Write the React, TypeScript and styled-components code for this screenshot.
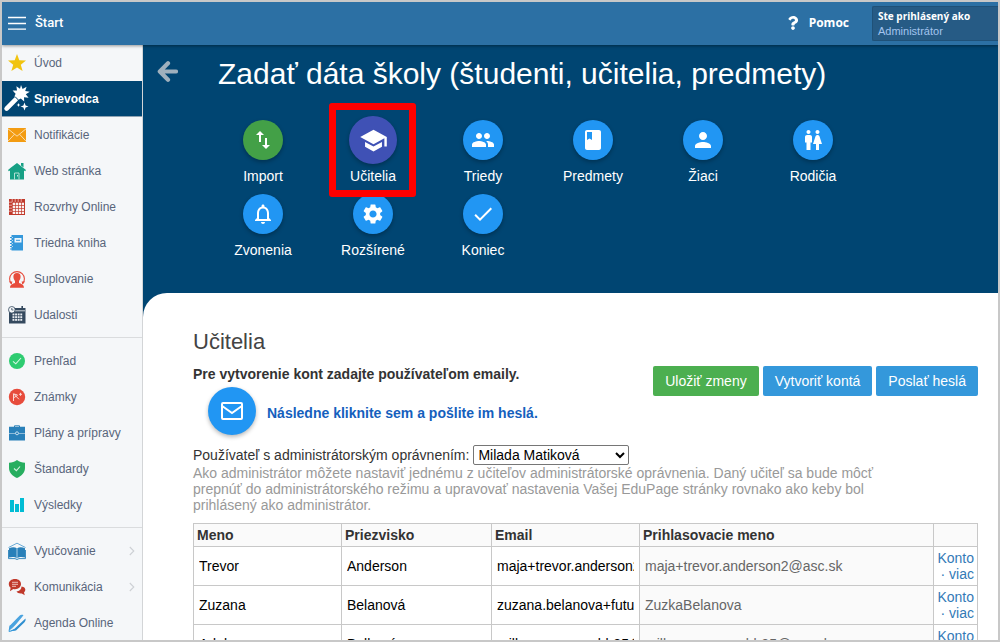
import React from "react";
import styled, { createGlobalStyle, css } from "styled-components";
import {
  MdBook,
  MdCheck,
  MdImportExport,
  MdNotificationsNone,
  MdPeople,
  MdPerson,
  MdSchool,
  MdSettings,
} from "react-icons/md";
import { FaQuestion } from "react-icons/fa";

const GlobalStyle = createGlobalStyle`
  * { box-sizing: border-box; }
  html, body, #root { height: 100%; }
  body {
    margin: 0;
    overflow: hidden;
    font-family: "Liberation Sans", Arial, sans-serif;
    font-size: 14px;
    line-height: 16px;
    color: #333;
  }
`;

const Frame = styled.div`
  display: flex;
  flex-direction: column;
  height: 100vh;
  border: 2px solid #c8c8c8;
  background: #fff;
  overflow: hidden;
`;

const TopBar = styled.header`
  position: relative;
  z-index: 2;
  flex: none;
  display: flex;
  align-items: center;
  height: 43px;
  padding-left: 6px;
  background: #2c70a4;
  box-shadow: 0 1px 3px rgba(0, 0, 0, 0.4);
  color: #fff;
`;

const StartButton = styled.button`
  display: flex;
  align-items: center;
  gap: 9px;
  padding: 0 0 2px;
  border: 0;
  background: none;
  color: #fff;
  font: 500 13px/16px Roboto, "Liberation Sans", sans-serif;
`;

const HelpLink = styled.a`
  display: flex;
  align-items: center;
  gap: 9px;
  margin-left: auto;
  margin-right: 23px;
  padding-bottom: 2px;
  color: #fff;
  font: 700 12px/16px "Open Sans", sans-serif;
  text-decoration: none;
`;

const UserBox = styled.div`
  width: 126px;
  height: 35px;
  padding: 2px 5px;
  border: 1px solid #1f5178;
  border-right: 0;
  border-radius: 2px 0 0 2px;
  background: #265b85;
  font: 700 10px/15px "Open Sans", sans-serif;
  white-space: nowrap;
`;

const UserRole = styled.div`
  color: #a3c4ee;
  font: 400 11px/14px "Liberation Sans", Arial, sans-serif;
`;

const Body = styled.div`
  flex: 1;
  display: flex;
  min-height: 0;
`;

const Sidebar = styled.nav`
  flex: none;
  width: 141px;
  border-right: 1px solid #d3d5d7;
  background: #f5f7f9;
  overflow: hidden;
`;

const NavGroup = styled.div`
  & + & {
    margin-top: 4px;
    padding-top: 5px;
    border-top: 1px solid #dadcde;
  }
`;

const NavItem = styled.a<{ $active?: boolean }>`
  display: flex;
  align-items: center;
  gap: 4px;
  height: 36px;
  padding: 0 7px 0 1px;
  color: #58657b;
  font-size: 12px;
  text-decoration: none;
  ${(p) =>
    p.$active &&
    css`
      border-bottom: 1px solid #8fa3b3;
      background: #004572;
      color: #fff;
      font-weight: 700;
    `}
`;

const NavIcon = styled.span`
  flex: none;
  display: flex;
  justify-content: center;
  width: 27px;
`;

const NavLabel = styled.span`
  flex: 1;
  white-space: nowrap;
`;

const Main = styled.main`
  flex: 1;
  display: flex;
  flex-direction: column;
  min-width: 0;
  background: #004572;
`;

const Hero = styled.section`
  flex: none;
  display: flex;
  align-items: flex-start;
  gap: 40px;
  padding: 10px 14px 35px;
  color: #fff;
`;

const BackButton = styled.button`
  display: flex;
  padding: 6px 0;
  border: 0;
  background: none;
  color: #9fb0bd;
`;

const WizardTitle = styled.h1`
  margin: 0 0 23px;
  font-size: 30px;
  line-height: 38px;
  font-weight: 400;
`;

const Steps = styled.div`
  display: grid;
  grid-template-columns: repeat(6, 110px);
  row-gap: 6px;
  margin-left: -10px;
`;

const Step = styled.a`
  position: relative;
  display: flex;
  flex-direction: column;
  align-items: center;
  gap: 4px;
  color: #fff;
  text-decoration: none;
`;

const StepSlot = styled.span`
  display: flex;
  align-items: center;
  height: 48px;
`;

const Disc = styled.span<{ $color: string; $size: number }>`
  display: flex;
  align-items: center;
  justify-content: center;
  width: ${(p) => p.$size}px;
  height: ${(p) => p.$size}px;
  border-radius: 50%;
  background: ${(p) => p.$color};
  color: #fff;
  box-shadow: 0 2px 4px rgba(0, 0, 0, 0.28);
`;

const Highlight = styled.span`
  position: absolute;
  z-index: 1;
  top: -13px;
  left: 11px;
  width: 87px;
  height: 94px;
  border: 7px solid #fe0000;
  border-radius: 3px;
`;

const Sheet = styled.section`
  flex: 1;
  min-height: 0;
  padding: 35px 20px 0 50px;
  border-top-left-radius: 24px;
  background: #fff;
  overflow: hidden;
`;

const SheetTitle = styled.h2`
  margin: 0 0 10px;
  color: #444;
  font-size: 22px;
  line-height: 28px;
  font-weight: 400;
`;

const Intro = styled.div`
  display: flex;
  justify-content: space-between;
  align-items: flex-start;
`;

const Hint = styled.p`
  margin: 0 0 5px;
  font-weight: 700;
`;

const SendLink = styled.a`
  display: flex;
  align-items: center;
  gap: 11px;
  margin-left: 15px;
  color: #1560bd;
  font-weight: 700;
  text-decoration: none;
`;

const SendText = styled.span`
  padding-top: 4px;
`;

const Actions = styled.div`
  display: flex;
  gap: 4px;
`;

const Action = styled.button<{ $color: string }>`
  height: 30px;
  padding: 0 12px;
  border: 0;
  border-radius: 2px;
  background: ${(p) => p.$color};
  color: #fff;
  font: inherit;
  white-space: nowrap;
`;

const AdminRow = styled.div`
  display: flex;
  align-items: center;
  gap: 4px;
  margin-top: 10px;

  select {
    width: 156px;
    height: 20px;
    border: 1px solid #767676;
    border-radius: 2px;
    background-color: #fff;
    color: #000;
    font: inherit;
  }
`;

const AdminNote = styled.p`
  max-width: 700px;
  margin: 0 0 10px;
  color: #999;
`;

const Table = styled.table`
  width: 100%;
  table-layout: fixed;
  border-collapse: collapse;

  th,
  td {
    border: 1px solid #c8c8c8;
  }
  th {
    height: 23px;
    padding: 0 3px;
    background: #fafafa;
    text-align: left;
  }
  td {
    height: 39px;
    padding: 0 5px;
  }
`;

const Col = styled.col<{ $width?: number }>`
  width: ${(p) => (p.$width ? `${p.$width}px` : "auto")};
`;

const CellInput = styled.input`
  display: block;
  width: 100%;
  padding: 0;
  border: 0;
  background: none;
  color: #000;
  font: inherit;
`;

const LoginCell = styled.td`
  background: #fafafa;
  color: #666;
`;

const LinksCell = styled.td`
  && {
    padding: 0 3px;
  }
  text-align: right;
  color: #337ab7;

  a {
    color: inherit;
    text-decoration: none;
  }
`;

const Svg = ({ w = 18, h = 18, box = "0 0 18 18", children }: { w?: number; h?: number; box?: string; children: React.ReactNode }) => (
  <svg width={w} height={h} viewBox={box} fill="none" aria-hidden="true">
    {children}
  </svg>
);

const StarIcon = () => (
  <Svg>
    <path d="M9 0l2.300 6.200L18 6.500l-5.200 4.200L14.600 17 9 13.400 3.400 17l1.800-6.300L0 6.500l6.700-.3z" fill="#f1c40f" />
  </Svg>
);

const WandIcon = () => (
  <Svg w={27} h={27} box="0 0 27 27">
    <path d="M3.600 23.600L13 14.200" stroke="#fff" strokeWidth="4.600" strokeLinecap="round" />
    <path d="M13.800 13.200L16 11" stroke="#fff" strokeWidth="4.600" />
    <path d="M18 0l1.600 4 4-2.200-1.400 4.200 4.600.8-4 2.400 2.800 3.600-4.600-.6.200 4.400-3.400-3-2.800 1.400-3.600-3.600 1.200-2.600-3-3.200 4.400-.2-.6-4.200 3.600 2.600z" fill="#fff" />
    <path d="M12 11.600l3.400 3.400" stroke="#004572" strokeWidth="1" />
    <path d="M21.500 17.500l1.100 2.900 2.900 1.100-2.900 1.100-1.100 2.900-1.100-2.900-2.900-1.100 2.900-1.100zM15.500 18l.6 1.400 1.400.6-1.400.6-.6 1.400-.6-1.400-1.400-.6 1.400-.6z" fill="#fff" />
  </Svg>
);

const EnvelopeIcon = () => (
  <Svg h={14} box="0 0 18 14">
    <path d="M0 0h18v14H0z" fill="#f39c12" />
    <path d="M0 .8l9 7.400 9-7.400M0 13.200l6.500-7M18 13.200l-6.500-7" stroke="#fbe3bd" strokeWidth=".9" />
  </Svg>
);

const HouseIcon = () => (
  <Svg>
    <path d="M9 1l9 7-.8 1.200L16 8.500V17.500H2V8.500l-1.200.7L0 8l3-2.400z" fill="#16a085" />
    <path d="M13 1h2.500v4.500L13 3.600z" fill="#16a085" />
    <path d="M6.500 17.500v-6.500h4.500v6.500" stroke="#bfe6dd" strokeWidth=".9" />
    <path d="M9.500 13v1.500" stroke="#bfe6dd" />
  </Svg>
);

const TimetableIcon = () => (
  <Svg>
    <path d="M1 1h16v16H1z" fill="#c0392b" />
    {[0, 1, 2, 3].map((r) =>
      [0, 1, 2, 3].map((c) => <rect key={`${r}-${c}`} x={4.700 + c * 3} y={4.700 + r * 3} width="2.300" height="2.300" fill="#faf0ef" />)
    )}
    <path d="M4.200 1v3M7.200 1v3M10.200 1v3M13.200 1v3M1 4.200h3M1 7.200h3M1 10.200h3M1 13.200h3" stroke="#f0c4bf" strokeWidth=".8" />
  </Svg>
);

const NotebookIcon = () => (
  <Svg>
    <path d="M3.500 1H15v15.500H3.500z" fill="#3498db" />
    <path d="M6.500 4h7v4.500h-7z" fill="#eaf5fc" />
    <path d="M8 6.300h4" stroke="#3498db" />
    <path d="M2 3.500h2M2 6.500h2M2 9.500h2M2 12.500h2M2 15h2" stroke="#3498db" strokeWidth="1.200" />
    <path d="M4 3.500h1M4 6.500h1M4 9.500h1M4 12.500h1" stroke="#d6ebf8" strokeWidth=".8" />
  </Svg>
);

const SubstituteIcon = () => (
  <Svg>
    <path d="M3.500 14A7.400 7.400 0 1 1 14.500 14" stroke="#e74c3c" strokeWidth="1.100" />
    <path d="M1 11.500l2.600 3 .8-3zM17 11.500l-2.600 3-.8-3z" fill="#e74c3c" />
    <path d="M9 3c2.500 0 3.700 1.600 3.600 3.800-.1 2-.9 3.500-1.600 4.200v2c2 .6 5 1.500 5 4.800H2c0-3.300 3-4.200 5-4.800v-2c-.7-.7-1.500-2.200-1.600-4.200C5.300 4.600 6.500 3 9 3z" fill="#e74c3c" />
  </Svg>
);

const EventsIcon = () => (
  <Svg>
    <path d="M1 2h16.500v15.500H1z" fill="#34495e" />
    <path d="M7 4.800h10" stroke="#f5f7f9" strokeWidth=".8" />
    <path d="M14.200 0v3.500" stroke="#34495e" strokeWidth="1.600" />
    {[0, 1, 2].map((r) =>
      [0, 1, 2, 3].map((c) => <rect key={`${r}-${c}`} x={4.500 + c * 2.600} y={7.500 + r * 2.700} width="1.900" height="1.900" fill="#e8ecf0" />)
    )}
    <circle cx="3.800" cy="3.800" r="3.300" fill="#f5f7f9" stroke="#34495e" strokeWidth=".8" />
    <path d="M3.800 2v2H5.500" stroke="#34495e" strokeWidth=".8" />
  </Svg>
);

const CheckDiscIcon = () => (
  <Svg>
    <circle cx="9" cy="9" r="8" fill="#2ecc71" />
    <path d="M5 9.300l2.800 2.500L13 6" stroke="#d9f7e5" strokeWidth="1.100" />
  </Svg>
);

const GradeIcon = () => (
  <Svg>
    <circle cx="9" cy="9" r="8.200" fill="#e74c3c" />
    <path d="M5.500 13V5.800l5.500 5.500M5.500 9.800l4-2.300M5.500 5.800l4 1.200M12.500 4.800v3M11 6.300h3" stroke="#fbd9d5" strokeWidth="1" />
  </Svg>
);

const BriefcaseIcon = () => (
  <Svg>
    <path d="M6.500 3V1.800h5V3" stroke="#2980b9" strokeWidth="1" />
    <path d="M1 2.700h16v6.200H1zM1 9.600h16v6.900H1z" fill="#2980b9" />
    <circle cx="9" cy="9.300" r="1.500" fill="#2980b9" stroke="#e3f0f9" strokeWidth=".8" />
  </Svg>
);

const ShieldIcon = () => (
  <Svg>
    <path d="M9 0c2.500 1.900 5 2.600 8 2.700V8c0 4.800-3.500 8-8 10-4.500-2-8-5.200-8-10V2.700C4 2.600 6.500 1.900 9 0z" fill="#27ae60" />
    <path d="M6 8.500l2.400 2.200L12 6.500" stroke="#d4f1e0" strokeWidth="1.100" />
  </Svg>
);

const BarsIcon = () => (
  <Svg>
    <path d="M2 4h4v12H2zM7 8h4v8H7zM12 2h4v14h-4z" fill="#00bcd4" />
  </Svg>
);

const SchoolBookIcon = () => (
  <Svg>
    <path d="M.5 5.500L9 1.200l8.500 4.300" stroke="#5aa3d3" strokeWidth=".9" />
    <path d="M1 6.300C4 5 7 5 9 6.500 11 5 14 5 17 6.300V15.500c-3-.8-6-.8-8 .8-2-1.600-5-1.600-8-.8z" fill="#2980b9" />
    <path d="M9 6.500v9.800" stroke="#cfe4f3" strokeWidth=".8" />
    <path d="M.5 8v8.600h6.500l2 .9 2-.9h6.500V8" stroke="#2980b9" strokeWidth=".9" />
  </Svg>
);

const ChatIcon = () => (
  <Svg>
    <path d="M13.500 8.500c3 .2 4 2 3.800 3.600-.1 1.200-.9 2-1.300 2.300l.8 2.800-3-1.800c-2.600.2-4.600-.4-5.300-1.900 2.800-.3 5-2 5-5z" fill="#c0392b" />
    <path d="M7 1c3.800 0 6 2.200 6 5s-2.400 5.200-6 5.200c-.6 0-1.200 0-1.700-.2L2 13.300l.6-3.500C1.300 8.900.8 7.500.8 6 .8 3.200 3.300 1 7 1z" fill="#c0392b" />
    <path d="M4 4.300h6M4 6.300h6M4 8.300h4" stroke="#f3cdc9" strokeWidth=".9" />
  </Svg>
);

const PencilIcon = () => (
  <Svg>
    <path d="M2 11.500L11.500 1.800c1-1.100 2.500-1.300 4-.6L5 14l-4 3z" fill="#4aa3df" />
    <path d="M6.500 14.800L17.500 4.500c.3 1.500 0 2.600-1 3.700L8 16.500 1 17.500z" fill="#2f8fd0" />
    <path d="M1 17.500L16.500 3" stroke="#f5f7f9" strokeWidth=".8" />
    <path d="M2 11.500L1 17.500l6-1.800" stroke="#3498db" strokeWidth=".9" />
  </Svg>
);

const MenuIcon = () => (
  <Svg h={14} box="0 0 18 14">
    <path d="M0 1.500h18M0 7.500h18M0 13.200h18" stroke="#fff" strokeWidth="1.300" />
  </Svg>
);

const Chevron = () => (
  <Svg w={6} h={10} box="0 0 6 10">
    <path d="M.8 1l4 4-4 4" stroke="#cdd0d4" strokeWidth="1.100" />
  </Svg>
);

const BackArrow = () => (
  <Svg w={21} h={21} box="0 0 21 21">
    <path d="M11 2.300L2.800 10.500l8.200 8.200M3.500 10.500H19" stroke="currentColor" strokeWidth="4.200" strokeLinecap="round" strokeLinejoin="round" />
  </Svg>
);

const MailIcon = () => (
  <Svg w={22} h={18} box="0 0 22 18">
    <rect x="1" y="1" width="20" height="16" rx="1" stroke="currentColor" strokeWidth="2" />
    <path d="M1.500 4.200L11 11l9.500-6.800" stroke="currentColor" strokeWidth="2" />
  </Svg>
);

const RestroomIcon = ({ size }: { size: number }) => (
  <Svg w={size} h={size} box="0 0 24 24">
    <path
      d="M5.500 22v-7.500H4V9c0-1.100.9-2 2-2h3c1.100 0 2 .9 2 2v5.500H9.500V22h-4zM18 22v-6h3l-2.540-7.630C18.180 7.550 17.420 7 16.560 7h-.12c-.86 0-1.630.55-1.900 1.370L12 16h3v6h3zM7.500 6c1.110 0 2-.89 2-2s-.89-2-2-2-2 .89-2 2 .89 2 2 2zm9 0c1.110 0 2-.89 2-2s-.89-2-2-2-2 .89-2 2 .89 2 2 2z"
      fill="currentColor"
    />
  </Svg>
);

interface NavEntry {
  label: string;
  icon: React.ReactNode;
  active?: boolean;
  expandable?: boolean;
}

const navGroups: NavEntry[][] = [
  [
    { label: "Úvod", icon: <StarIcon /> },
    { label: "Sprievodca", icon: <WandIcon />, active: true },
    { label: "Notifikácie", icon: <EnvelopeIcon /> },
    { label: "Web stránka", icon: <HouseIcon /> },
    { label: "Rozvrhy Online", icon: <TimetableIcon /> },
    { label: "Triedna kniha", icon: <NotebookIcon /> },
    { label: "Suplovanie", icon: <SubstituteIcon /> },
    { label: "Udalosti", icon: <EventsIcon /> },
  ],
  [
    { label: "Prehľad", icon: <CheckDiscIcon /> },
    { label: "Známky", icon: <GradeIcon /> },
    { label: "Plány a prípravy", icon: <BriefcaseIcon /> },
    { label: "Štandardy", icon: <ShieldIcon /> },
    { label: "Výsledky", icon: <BarsIcon /> },
  ],
  [
    { label: "Vyučovanie", icon: <SchoolBookIcon />, expandable: true },
    { label: "Komunikácia", icon: <ChatIcon />, expandable: true },
    { label: "Agenda Online", icon: <PencilIcon /> },
  ],
];

const BLUE = "#2196f3";

const steps = [
  { label: "Import", Icon: MdImportExport, color: "#43a047" },
  { label: "Učitelia", Icon: MdSchool, color: "#3f51b5", current: true },
  { label: "Triedy", Icon: MdPeople, color: BLUE },
  { label: "Predmety", Icon: MdBook, color: BLUE },
  { label: "Žiaci", Icon: MdPerson, color: BLUE },
  { label: "Rodičia", Icon: RestroomIcon, color: BLUE },
  { label: "Zvonenia", Icon: MdNotificationsNone, color: BLUE },
  { label: "Rozšírené", Icon: MdSettings, color: BLUE },
  { label: "Koniec", Icon: MdCheck, color: BLUE },
];

const teachers = [
  { first: "Trevor", last: "Anderson", email: "maja+trevor.anderson2@asc.sk", login: "maja+trevor.anderson2@asc.sk" },
  { first: "Zuzana", last: "Belanová", email: "zuzana.belanova+futurama@asc.sk", login: "ZuzkaBelanova" },
  { first: "Adela", last: "Balková", email: "milka.purpurea+bb25@asc.sk", login: "milka.purpurea+bb25@asc.sk" },
];

export default function App() {
  return (
    <Frame>
      <GlobalStyle />
      <TopBar>
        <StartButton type="button">
          <MenuIcon />
          Štart
        </StartButton>
        <HelpLink href="#pomoc">
          <FaQuestion size={14} />
          Pomoc
        </HelpLink>
        <UserBox>
          Ste prihlásený ako
          <UserRole>Administrátor</UserRole>
        </UserBox>
      </TopBar>
      <Body>
        <Sidebar>
          {navGroups.map((group, i) => (
            <NavGroup key={i}>
              {group.map((item) => (
                <NavItem key={item.label} href="#" $active={item.active}>
                  <NavIcon>{item.icon}</NavIcon>
                  <NavLabel>{item.label}</NavLabel>
                  {item.expandable && <Chevron />}
                </NavItem>
              ))}
            </NavGroup>
          ))}
        </Sidebar>
        <Main>
          <Hero>
            <BackButton type="button" aria-label="Späť">
              <BackArrow />
            </BackButton>
            <div>
              <WizardTitle>Zadať dáta školy (študenti, učitelia, predmety)</WizardTitle>
              <Steps>
                {steps.map(({ label, Icon, color, current }) => (
                  <Step key={label} href="#">
                    <StepSlot>
                      <Disc $color={color} $size={current ? 48 : 40}>
                        <Icon size={current ? 29 : 24} />
                      </Disc>
                    </StepSlot>
                    {label}
                    {current && <Highlight />}
                  </Step>
                ))}
              </Steps>
            </div>
          </Hero>
          <Sheet>
            <SheetTitle>Učitelia</SheetTitle>
            <Intro>
              <div>
                <Hint>Pre vytvorenie kont zadajte používateľom emaily.</Hint>
                <SendLink href="#poslat">
                  <Disc $color={BLUE} $size={48}>
                    <MailIcon />
                  </Disc>
                  <SendText>Následne kliknite sem a pošlite im heslá.</SendText>
                </SendLink>
              </div>
              <Actions>
                <Action type="button" $color="#4caf50">Uložiť zmeny</Action>
                <Action type="button" $color="#3498db">Vytvoriť kontá</Action>
                <Action type="button" $color="#3498db">Poslať heslá</Action>
              </Actions>
            </Intro>
            <AdminRow>
              <label htmlFor="admin">Používateľ s administrátorským oprávnením:</label>
              <select id="admin" defaultValue="Milada Matiková">
                <option>Milada Matiková</option>
              </select>
            </AdminRow>
            <AdminNote>
              Ako administrátor môžete nastaviť jednému z učiteľov administrátorské oprávnenia. Daný učiteľ sa bude môcť
              prepnúť do administrátorského režimu a upravovať nastavenia Vašej EduPage stránky rovnako ako keby bol
              prihlásený ako administrátor.
            </AdminNote>
            <Table>
              <colgroup>
                <Col $width={148} />
                <Col $width={150} />
                <Col $width={148} />
                <Col />
                <Col $width={44} />
              </colgroup>
              <thead>
                <tr>
                  <th>Meno</th>
                  <th>Priezvisko</th>
                  <th>Email</th>
                  <th>Prihlasovacie meno</th>
                  <th />
                </tr>
              </thead>
              <tbody>
                {teachers.map((t) => (
                  <tr key={t.login}>
                    <td><CellInput aria-label="Meno" defaultValue={t.first} /></td>
                    <td><CellInput aria-label="Priezvisko" defaultValue={t.last} /></td>
                    <td><CellInput aria-label="Email" defaultValue={t.email} /></td>
                    <LoginCell>{t.login}</LoginCell>
                    <LinksCell>
                      <a href="#konto">Konto</a> · <a href="#viac">viac</a>
                    </LinksCell>
                  </tr>
                ))}
              </tbody>
            </Table>
          </Sheet>
        </Main>
      </Body>
    </Frame>
  );
}
